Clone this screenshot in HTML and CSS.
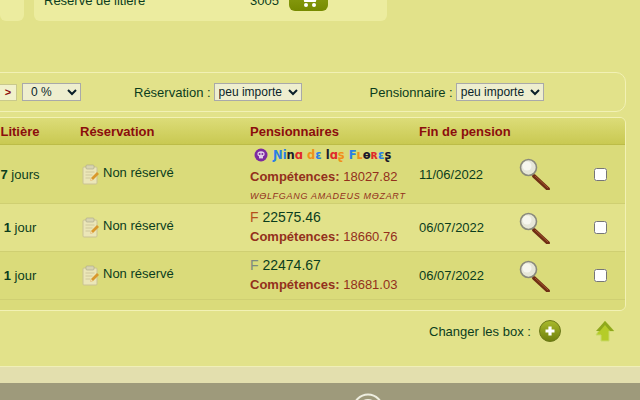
FILE: index.html
```html
<!DOCTYPE html>
<html lang="fr">
<head>
  <meta charset="UTF-8" />
  <title>Pensions</title>
  <link rel="stylesheet" href="styles.css">
</head>
<body>
  <div class="main">
    <div class="cards">
      <div class="card card-left"></div>
      <div class="card card-shop">
        <span class="shop-name">Réserve de litière</span>
        <span class="shop-price">3005</span>
        <button class="cart-btn">
          <svg width="22" height="20" viewBox="0 0 22 20"><path d="M2 3h3l2 9h10l2-7H6" fill="none" stroke="#fff" stroke-width="2"/><circle cx="8" cy="16" r="2" fill="#fff"/><circle cx="16" cy="16" r="2" fill="#fff"/></svg>
        </button>
      </div>
    </div>

    <div class="filters">
      <button class="next-btn">&gt;</button>
      <select class="sel-percent"><option>0 %</option></select>
      <label class="lbl-resa">Réservation :</label>
      <select class="sel-wide"><option>peu importe</option></select>
      <label class="lbl-pens">Pensionnaire :</label>
      <select class="sel-wide"><option>peu importe</option></select>
    </div>

    <div class="panel">
      <table>
        <thead>
          <tr>
            <th class="col-lit">Litière</th>
            <th class="col-resa">Réservation</th>
            <th class="col-pens">Pensionnaires</th>
            <th class="col-fin">Fin de pension</th>
            <th class="col-zoom"></th>
            <th class="col-check"></th>
          </tr>
        </thead>
        <tbody>
          <tr class="row-first dark">
            <td class="lit"><b>7</b> jours</td>
            <td><div class="resa"><svg class="note" width="18" height="21" viewBox="0 0 18 21"><use href="#note-icon"/></svg><span>Non réservé</span></div></td>
            <td class="pens">
              <div class="name-line">
                <svg width="14" height="14" viewBox="0 0 14 14"><circle cx="7" cy="7" r="6.5" fill="#7d2aa0"/><ellipse cx="7" cy="6" rx="3.6" ry="2.8" fill="#e3cfe8"/><rect x="5" y="8" width="4" height="2.4" fill="#e3cfe8"/><circle cx="5.6" cy="6" r="1" fill="#7d2aa0"/><circle cx="8.4" cy="6" r="1" fill="#7d2aa0"/></svg>
                <span class="fancy"><i class="c-blue">Ɲ</i><i class="c-blue">i</i><i class="c-black">n</i><i class="c-red">ɑ</i> <i class="c-orange">d</i><i class="c-blue">ɛ</i> <i class="c-black">l</i><i class="c-red">ɑ</i><i class="c-orange">ʂ</i> <i class="c-blue">F</i><i class="c-orange">ʟ</i><i class="c-black">ɵ</i><i class="c-red">ʀ</i><i class="c-blue">ɛ</i><i class="c-black">ʂ</i></span>
              </div>
              <div class="skill skill-tall"><b>Compétences:</b> 18027.82</div>
              <div class="owner">WƟLFGANG AMADEUS MƟZART</div>
            </td>
            <td class="fin">11/06/2022</td>
            <td class="zoom"><svg width="34" height="32" viewBox="0 0 34 32"><use href="#zoom-icon"/></svg></td>
            <td class="check"><input type="checkbox"></td>
          </tr>
          <tr class="row-norm">
            <td class="lit"><b>1</b> jour</td>
            <td><div class="resa"><svg class="note" width="18" height="21" viewBox="0 0 18 21"><use href="#note-icon"/></svg><span>Non réservé</span></div></td>
            <td class="pens">
              <div class="num-line"><span class="sex-f">F</span> 22575.46</div>
              <div class="skill"><b>Compétences:</b> 18660.76</div>
            </td>
            <td class="fin">06/07/2022</td>
            <td class="zoom"><svg width="34" height="32" viewBox="0 0 34 32"><use href="#zoom-icon"/></svg></td>
            <td class="check"><input type="checkbox"></td>
          </tr>
          <tr class="row-norm dark">
            <td class="lit"><b>1</b> jour</td>
            <td><div class="resa"><svg class="note" width="18" height="21" viewBox="0 0 18 21"><use href="#note-icon"/></svg><span>Non réservé</span></div></td>
            <td class="pens">
              <div class="num-line"><span class="sex-g">F</span> 22474.67</div>
              <div class="skill"><b>Compétences:</b> 18681.03</div>
            </td>
            <td class="fin">06/07/2022</td>
            <td class="zoom"><svg width="34" height="32" viewBox="0 0 34 32"><use href="#zoom-icon"/></svg></td>
            <td class="check"><input type="checkbox"></td>
          </tr>
        </tbody>
      </table>
      <div class="panel-end"></div>
    </div>

    <div class="actions">
      <span class="change-lbl">Changer les box :</span>
      <svg class="plus" width="22" height="22" viewBox="0 0 22 22"><defs><linearGradient id="plus-grad" x1="0" y1="0" x2="0" y2="1"><stop offset="0" stop-color="#a9ba2c"/><stop offset="1" stop-color="#6f7f0c"/></linearGradient></defs><circle cx="11" cy="11" r="10.5" fill="url(#plus-grad)" stroke="#6d7a1a"/><path d="M11 6.5v9M6.5 11h9" stroke="#fff" stroke-width="3.2"/></svg>
      <svg class="up" width="20" height="23" viewBox="0 0 20 23"><path d="M10 1l9 10h-5v10H6v-6H1z" fill="#b5cc28" stroke="#c9d96a"/><path d="M10 1l9 10h-4L10 5 5 11H1z" fill="#8fa81c"/></svg>
    </div>
  </div>

  <div class="strip"></div>
  <div class="footer">
    <svg width="34" height="34" viewBox="0 0 34 34"><circle cx="17" cy="17" r="14.5" fill="none" stroke="#eeeee0" stroke-width="2"/><circle cx="17" cy="17" r="9" fill="none" stroke="#eeeee0" stroke-width="2"/></svg>
  </div>

  <svg class="defs" width="0" height="0">
    <symbol id="note-icon" viewBox="0 0 18 21">
      <rect x="1" y="3" width="14" height="17" rx="1" fill="#ebe6b8" stroke="#c9c294"/>
      <rect x="4" y="1" width="8" height="4" rx="1" fill="#d8d4b0" stroke="#aaa68a" stroke-width=".6"/>
      <path d="M3.5 8h9M3.5 11h7M3.5 14h5" stroke="#cfc89c"/>
      <path d="M8 17l1-3 6-6 2 2-6 6z" fill="#d9982c"/>
      <path d="M8 17l1-3 2 2z" fill="#f0dcae"/>
    </symbol>
    <symbol id="zoom-icon" viewBox="0 0 34 32">
      <path d="M15 18l14 13" stroke="#6f2f14" stroke-width="3.8" stroke-linecap="round"/>
      <path d="M16 18l13 12" stroke="#a5542c" stroke-width="1"/>
      <circle cx="9.5" cy="9.5" r="8" fill="#e6e6d8" stroke="#8a8a7c" stroke-width="1.6"/>
      <circle cx="8" cy="8" r="4.5" fill="#f6f6ee"/>
    </symbol>
  </svg>
</body>
</html>
```

FILE: styles.css
```css
body {
  margin: 0;
  height: 400px;
  overflow: hidden;
  background: #9e9a7b;
  font-family: "Liberation Sans", Arial, sans-serif;
  font-size: 13px;
  color: #0b3d1d;
}

.main {
  display: flow-root;
  height: 366px;
  background: #e2e28a;
  border-bottom: 1px solid #f0efb8;
}

.cards {
  display: flex;
  gap: 10px;
  margin-top: -11px;
}

.card {
  height: 22px;
  padding-bottom: 10px;
  background: #ecec9f;
  border-radius: 0 0 6px 6px;
  display: flex;
  align-items: center;
}

.card-left {
  width: 24px;
}

.card-shop {
  width: 343px;
  padding-left: 10px;
}

.shop-name {
  width: 206px;
}

.shop-price {
  width: 39px;
}

.cart-btn {
  width: 39px;
  height: 22px;
  border: 0;
  padding: 0;
  border-radius: 0 0 6px 6px;
  background: linear-gradient(#8fa317, #768a00);
}

.filters {
  display: flex;
  align-items: center;
  height: 38px;
  margin: 51px 14px 0 -20px;
  border: 1px solid #f2f1b4;
  border-radius: 0 10px 10px 0;
}

.next-btn {
  width: 18px;
  height: 17px;
  margin-left: 18px;
  padding: 0;
  border: 1px solid #c9c98c;
  background: #f1f1cb;
  color: #8b0d0d;
  font: bold 11px "Liberation Sans", sans-serif;
}

select {
  height: 18px;
  padding: 0;
  border: 1px solid #a9a9a9;
  background: #eeeecf;
  color: #0a1f2a;
  font: 12px "Liberation Sans", sans-serif;
}

.sel-percent {
  width: 59px;
  margin-left: 5px;
  padding-left: 4px;
}

.sel-wide {
  width: 88px;
}

.lbl-resa {
  margin: 0 3px 0 53px;
}

.lbl-pens {
  margin: 0 3px 0 68px;
}

.panel {
  margin: 5px 14px 0 -20px;
  border: 1px solid #f2f1b4;
  border-radius: 0 6px 6px 0;
  overflow: hidden;
}

table {
  width: 100%;
  border-collapse: collapse;
  table-layout: fixed;
}

th {
  height: 26px;
  padding: 0;
  text-align: left;
  font-size: 13px;
  color: #8b0d0d;
  background: linear-gradient(#dcdc78, #c9c952);
  border-bottom: 1px solid #bcbc48;
}

td {
  padding: 0;
  background: #e2e28a;
  border-bottom: 1px solid #cfcf72;
}

tr.dark td {
  background: #dadb7a;
}

.row-first {
  height: 59px;
}

.row-norm {
  height: 48px;
}

.col-lit {
  width: 78px;
  padding-right: 21px;
  text-align: center;
}

.col-resa {
  width: 170px;
}

.col-pens {
  width: 169px;
}

.col-fin {
  width: 100px;
}

.col-zoom {
  width: 71px;
}

.lit {
  padding-right: 21px;
  text-align: center;
}

.resa {
  display: flex;
  align-items: center;
  gap: 3px;
}

.resa span {
  padding-bottom: 4px;
}

.note {
  margin-left: 2px;
}

.name-line {
  display: flex;
  align-items: center;
  gap: 5px;
  padding: 1px 0 0 4px;
  height: 16px;
}

.fancy {
  font: bold 11.5px "DejaVu Sans", sans-serif;
  white-space: pre;
}

.fancy i {
  font-style: normal;
}

.c-blue { color: #2a7fe6; }
.c-black { color: #1a1a2a; }
.c-red { color: #e02a2a; }
.c-orange { color: #f0901a; }

.skill {
  padding-bottom: 2px;
  line-height: 20px;
  color: #93301c;
}

.skill-tall {
  padding: 0;
  line-height: 27px;
}

.owner {
  font-size: 9px;
  font-style: italic;
  letter-spacing: .7px;
  color: #93301c;
  line-height: 12px;
}

.num-line {
  line-height: 20px;
  font-size: 14px;
}

.sex-f {
  color: #b5501c;
}

.sex-g {
  color: #7d8a80;
}

.zoom svg {
  display: block;
}

.check input {
  display: block;
  margin: 0 0 0 4px;
  width: 13px;
  height: 13px;
}

.panel-end {
  height: 10px;
  background: #dadb7a;
}

.actions {
  display: flex;
  align-items: center;
  height: 40px;
  padding-left: 429px;
}

.plus {
  margin-left: 8px;
}

.up {
  margin-left: 34px;
}

.strip {
  height: 16px;
  background: #e3dfae;
}

.footer {
  padding: 9px 0 0 351px;
  height: 8px;
  overflow: hidden;
}

.defs {
  display: block;
}
```
